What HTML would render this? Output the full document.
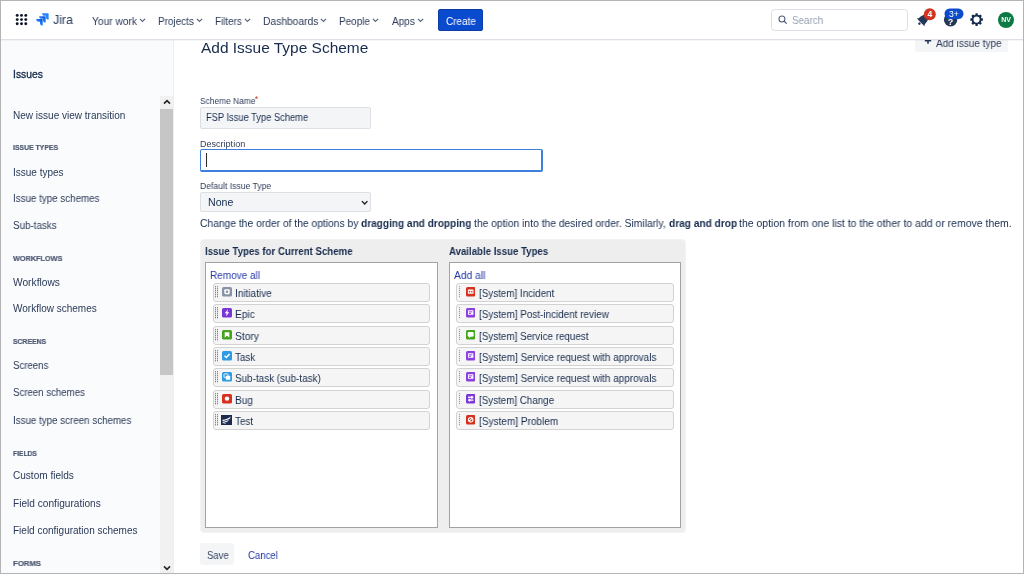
<!DOCTYPE html>
<html lang="en">
<head>
<meta charset="utf-8">
<title>Add Issue Type Scheme - Jira</title>
<style>
*{box-sizing:border-box;margin:0;padding:0}
html,body{width:1024px;height:574px;overflow:hidden;background:#fff}
body{font-family:"Liberation Sans","DejaVu Sans",sans-serif;color:#172b4d;font-size:10px;position:relative}
.abs{position:absolute}
.t{position:absolute;white-space:nowrap;line-height:1.2;transform-origin:0 0;will-change:transform}
#frame{position:absolute;left:0;top:0;width:1024px;height:574px;border:1px solid #b4b4b4;z-index:50}
#hdr{position:absolute;left:1px;top:1px;width:1022px;height:39px;background:#fff;border-bottom:1px solid #dcdfe5;z-index:5;box-shadow:0 1px 1px rgba(9,30,66,.04)}
.chev{position:absolute;top:17.6px;z-index:6}
#createb{position:absolute;left:438px;top:9px;width:45.4px;height:22px;background:#0a4acf;border-radius:2px;border:1px solid #0a3da6;z-index:6}
#searchb{position:absolute;left:771px;top:9px;width:136.5px;height:21.5px;border:1px solid #dde0e7;border-radius:3.5px;background:#fff;z-index:6}
#side{position:absolute;left:1px;top:40px;width:173px;height:533px;background:#fafbfc;border-right:1px solid #eceef1}
#sbar{position:absolute;left:160px;top:96px;width:13px;height:477px;background:#f1f1f1}
#thumb{position:absolute;left:0;top:13px;width:13px;height:265.6px;background:#c6c6c6}
.inp{position:absolute;left:200px;border:1px solid #dcdfe4;border-radius:2px;background:#f4f5f7}
#panel{position:absolute;left:200px;top:239px;width:485.6px;height:293.7px;background:#eeeeee;border:1px solid #f3f3f3;border-radius:4px}
.box{position:absolute;top:262px;height:266px;background:#fff;border:1px solid #a2a2a2}
.it{position:absolute;height:19px;background:#f5f5f5;border:1px solid #d2d2d2;border-radius:3px;z-index:3}
.g{position:absolute;left:1px;top:2px;width:3px;height:12px;background:linear-gradient(to right,transparent 1px,#f5f5f5 1px 2px,transparent 2px),repeating-linear-gradient(to bottom,#858585 0 1px,#cdcdcd 1px 2px)}
.g2{left:2px;width:2px;background:linear-gradient(to right,transparent 1px,#f5f5f5 1px),repeating-linear-gradient(to bottom,#9a9a9a 0 1px,#e2e2e2 1px 2px)}
.ic{position:absolute;z-index:4}
#saveb{position:absolute;left:200px;top:543.3px;width:34.3px;height:22.2px;background:#f4f5f7;border-radius:3px}
#additb{position:absolute;left:915px;top:30px;width:93px;height:22px;background:#f4f5f7;border-radius:2px;z-index:1}
</style>
</head>
<body>
<div id="side"></div>
<div id="sbar"><div id="thumb"></div>
<svg class="abs" style="left:2.6px;top:3px" width="8" height="6" viewBox="0 0 8 6"><path d="M1 4.6L4 1.6l3 3" fill="none" stroke="#2a2326" stroke-width="1.6"/></svg>
<svg class="abs" style="left:2.6px;top:469.1px" width="8" height="6" viewBox="0 0 8 6"><path d="M1 1.4L4 4.4l3-3" fill="none" stroke="#2a2326" stroke-width="1.6"/></svg>
</div>
<div id="additb"></div>
<svg class="abs" style="left:924px;top:37px;z-index:2" width="8" height="8" viewBox="0 0 8 8"><path d="M4 .4v6.4M.8 3.6h6.4" stroke="#253858" stroke-width="1.6"/></svg>
<span class="abs" style="left:254.8px;top:93.8px;font-size:9px;line-height:1.2;color:#d3341f;z-index:2">*</span>
<div class="inp" style="top:107px;width:171px;height:22px"></div>
<div class="inp" style="top:149px;width:343px;height:23px;background:#fff;border:solid #3f7fdc;border-width:1px 2px 2px 1px;border-radius:2px"></div>
<i class="abs" style="left:206px;top:153px;width:1px;height:13.5px;background:#2a2a2a"></i>
<div class="inp" style="top:192px;width:171px;height:20px"></div>
<svg class="abs" style="left:360.6px;top:199.8px;z-index:2" width="7.4" height="5.6" viewBox="0 0 8 6"><path d="M1 1.2l3 3 3-3" fill="none" stroke="#1c1c1c" stroke-width="1.5"/></svg>
<div id="panel"></div>
<div class="box" style="left:205px;width:233px"></div>
<div class="box" style="left:449px;width:232px"></div>
<div class="it" style="left:213px;top:283px;width:217px"><i class="g"></i></div>
<svg class="ic" style="left:222px;top:287.4px" width="10" height="9.4" viewBox="0 0 10 10" preserveAspectRatio="none"><rect width="10" height="10" rx="1.6" fill="#8993a4"/><rect x="2.3" y="2.3" width="5.4" height="5.4" rx="1.2" fill="#fff"/><circle cx="5" cy="5" r="1.3" fill="#8993a4"/></svg>
<div class="it" style="left:456px;top:283px;width:218px"><i class="g g2"></i></div>
<svg class="ic" style="left:465.8px;top:287.4px" width="9.4" height="9.4" viewBox="0 0 10 10" preserveAspectRatio="none"><rect width="10" height="10" rx="1.6" fill="#d6301f"/><rect x="2" y="2.7" width="6" height="4.6" rx=".9" fill="#fff"/><rect x="3" y="4.2" width="1.5" height="1.5" fill="#d6301f"/><rect x="5.5" y="4.2" width="1.5" height="1.5" fill="#d6301f"/></svg>
<div class="it" style="left:213px;top:304px;width:217px"><i class="g"></i></div>
<svg class="ic" style="left:222px;top:308.4px" width="10" height="9.4" viewBox="0 0 10 10" preserveAspectRatio="none"><rect width="10" height="10" rx="1.6" fill="#7a35d6"/><path d="M6.1 1.3L2.6 5.6h2L3.9 8.7 7.4 4.4H5.3z" fill="#fff"/></svg>
<div class="it" style="left:456px;top:304px;width:218px"><i class="g g2"></i></div>
<svg class="ic" style="left:465.8px;top:308.4px" width="9.4" height="9.4" viewBox="0 0 10 10" preserveAspectRatio="none"><rect width="10" height="10" rx="1.6" fill="#8a3fe0"/><rect x="2.1" y="2.5" width="5.8" height="4.8" rx=".5" fill="#fff"/><rect x="3" y="3.6" width="3.8" height="1" fill="#8a3fe0"/><rect x="3" y="5.2" width="2.4" height="1" fill="#8a3fe0"/></svg>
<div class="it" style="left:213px;top:326px;width:217px"><i class="g"></i></div>
<svg class="ic" style="left:222px;top:330.4px" width="10" height="9.4" viewBox="0 0 10 10" preserveAspectRatio="none"><rect width="10" height="10" rx="1.6" fill="#46a31c"/><path d="M2.7 2.3h4.6v5.6L5 6.1 2.7 7.9z" fill="#fff"/></svg>
<div class="it" style="left:456px;top:326px;width:218px"><i class="g g2"></i></div>
<svg class="ic" style="left:465.8px;top:330.4px" width="9.4" height="9.4" viewBox="0 0 10 10" preserveAspectRatio="none"><rect width="10" height="10" rx="1.6" fill="#46a31c"/><path d="M3 2.1h4a1.2 1.2 0 0 1 1.2 1.2v2.6a1.2 1.2 0 0 1-1.2 1.2H4.8L3.2 8.4V7.1H3a1.2 1.2 0 0 1-1.2-1.2V3.3A1.2 1.2 0 0 1 3 2.1z" fill="#fff"/></svg>
<div class="it" style="left:213px;top:347px;width:217px"><i class="g"></i></div>
<svg class="ic" style="left:222px;top:351.4px" width="10" height="9.4" viewBox="0 0 10 10" preserveAspectRatio="none"><rect width="10" height="10" rx="1.6" fill="#2f9ae4"/><path d="M2.5 5.1l1.8 1.8 3.3-3.7" fill="none" stroke="#fff" stroke-width="1.5"/></svg>
<div class="it" style="left:456px;top:347px;width:218px"><i class="g g2"></i></div>
<svg class="ic" style="left:465.8px;top:351.4px" width="9.4" height="9.4" viewBox="0 0 10 10" preserveAspectRatio="none"><rect width="10" height="10" rx="1.6" fill="#8a3fe0"/><rect x="2.1" y="2.5" width="5.8" height="4.8" rx=".5" fill="#fff"/><rect x="3" y="3.6" width="3.8" height="1" fill="#8a3fe0"/><rect x="3" y="5.2" width="2.4" height="1" fill="#8a3fe0"/></svg>
<div class="it" style="left:213px;top:368px;width:217px"><i class="g"></i></div>
<svg class="ic" style="left:222px;top:372.4px" width="10" height="9.4" viewBox="0 0 10 10" preserveAspectRatio="none"><rect width="10" height="10" rx="1.6" fill="#2f9ae4"/><rect x="2" y="2" width="4" height="4" rx=".6" fill="none" stroke="#fff" stroke-width=".9"/><rect x="3.9" y="3.9" width="4.3" height="4.3" rx=".6" fill="#fff"/></svg>
<div class="it" style="left:456px;top:368px;width:218px"><i class="g g2"></i></div>
<svg class="ic" style="left:465.8px;top:372.4px" width="9.4" height="9.4" viewBox="0 0 10 10" preserveAspectRatio="none"><rect width="10" height="10" rx="1.6" fill="#8a3fe0"/><rect x="2.1" y="2.5" width="5.8" height="4.8" rx=".5" fill="#fff"/><rect x="3" y="3.6" width="3.8" height="1" fill="#8a3fe0"/><rect x="3" y="5.2" width="2.4" height="1" fill="#8a3fe0"/></svg>
<div class="it" style="left:213px;top:390px;width:217px"><i class="g"></i></div>
<svg class="ic" style="left:222px;top:394.4px" width="10" height="9.4" viewBox="0 0 10 10" preserveAspectRatio="none"><rect width="10" height="10" rx="1.6" fill="#d6301f"/><circle cx="5" cy="5" r="2.3" fill="#fff"/></svg>
<div class="it" style="left:456px;top:390px;width:218px"><i class="g g2"></i></div>
<svg class="ic" style="left:465.8px;top:394.4px" width="9.4" height="9.4" viewBox="0 0 10 10" preserveAspectRatio="none"><rect width="10" height="10" rx="1.6" fill="#7a35d6"/><rect x="2.1" y="2.8" width="5.8" height="1.4" fill="#fff"/><rect x="2.1" y="5.8" width="5.8" height="1.4" fill="#fff"/><rect x="5.4" y="2" width="1.6" height="3" fill="#fff"/><rect x="3" y="5" width="1.6" height="3" fill="#fff"/></svg>
<div class="it" style="left:213px;top:411px;width:217px"><i class="g"></i></div>
<svg class="ic" style="left:221.2px;top:414.8px" width="11" height="10.4" viewBox="0 0 12 12" preserveAspectRatio="none"><rect width="12" height="12" fill="#1b2a4e"/><path d="M1.6 5.6C5 5.2 8.4 3.6 10.6 1.6C10.4 3 9.8 4 9 4.8L1.6 7.2z" fill="#fff"/><path d="M1.8 8.2L8.6 5.8C8.2 6.8 7.6 7.4 6.8 7.9L1.8 9.6z" fill="#e8ebf2"/><path d="M2 10.4l4.2-1.4c-.5.8-1.2 1.2-2 1.4z" fill="#cfd5e4"/></svg>
<div class="it" style="left:456px;top:411px;width:218px"><i class="g g2"></i></div>
<svg class="ic" style="left:465.8px;top:415.4px" width="9.4" height="9.4" viewBox="0 0 10 10" preserveAspectRatio="none"><rect width="10" height="10" rx="1.6" fill="#d6301f"/><circle cx="5" cy="5" r="2.4" fill="none" stroke="#fff" stroke-width="1.1"/><path d="M3.4 6.6l3.2-3.2" stroke="#fff" stroke-width="1.1"/></svg>
<div id="saveb"></div>
<div id="hdr"></div>
<svg class="abs" style="left:15px;top:13px;z-index:6" width="13" height="13" viewBox="0 0 13 13"><g fill="#0b1226"><circle cx="2.2" cy="2.4" r="1.45"/><circle cx="6.5" cy="2.4" r="1.45"/><circle cx="10.8" cy="2.4" r="1.45"/><circle cx="2.2" cy="6.6" r="1.45"/><circle cx="6.5" cy="6.6" r="1.45"/><circle cx="10.8" cy="6.6" r="1.45"/><circle cx="2.2" cy="10.8" r="1.45"/><circle cx="6.5" cy="10.8" r="1.45"/><circle cx="10.8" cy="10.8" r="1.45"/></g></svg>
<svg class="abs" style="left:34.3px;top:10.9px;z-index:6" width="17.1" height="17.1" viewBox="0 0 32 32"><defs><linearGradient id="jg1" x1="22" y1="9.6" x2="15" y2="16.8" gradientUnits="userSpaceOnUse"><stop offset=".18" stop-color="#0b55d8"/><stop offset="1" stop-color="#2684ff"/></linearGradient><linearGradient id="jg2" x1="16.4" y1="15.2" x2="9.4" y2="22.4" gradientUnits="userSpaceOnUse"><stop offset=".18" stop-color="#0b55d8"/><stop offset="1" stop-color="#2684ff"/></linearGradient></defs><path d="M26.42 4H15.2a5.06 5.06 0 0 0 5.06 5.06h2.07v2A5.06 5.06 0 0 0 27.4 16.1V5a1 1 0 0 0-.98-1z" fill="#2684ff"/><path d="M20.86 9.6H9.64a5.06 5.06 0 0 0 5.06 5.05h2.07v2a5.06 5.06 0 0 0 5.06 5.06V10.57a1 1 0 0 0-.97-.97z" fill="url(#jg1)"/><path d="M15.3 15.18H4.08a5.06 5.06 0 0 0 5.06 5.06h2.07v2a5.06 5.06 0 0 0 5.05 5.05V16.15a1 1 0 0 0-.96-.97z" fill="url(#jg2)"/></svg>
<svg class="chev" style="left:138.6px" width="7" height="5" viewBox="0 0 7 5"><path d="M.9 .9l2.6 2.6L6.1 .9" fill="none" stroke="#55637c" stroke-width="1.15"/></svg><svg class="chev" style="left:196.2px" width="7" height="5" viewBox="0 0 7 5"><path d="M.9 .9l2.6 2.6L6.1 .9" fill="none" stroke="#55637c" stroke-width="1.15"/></svg><svg class="chev" style="left:243.9px" width="7" height="5" viewBox="0 0 7 5"><path d="M.9 .9l2.6 2.6L6.1 .9" fill="none" stroke="#55637c" stroke-width="1.15"/></svg><svg class="chev" style="left:319.6px" width="7" height="5" viewBox="0 0 7 5"><path d="M.9 .9l2.6 2.6L6.1 .9" fill="none" stroke="#55637c" stroke-width="1.15"/></svg><svg class="chev" style="left:371.8px" width="7" height="5" viewBox="0 0 7 5"><path d="M.9 .9l2.6 2.6L6.1 .9" fill="none" stroke="#55637c" stroke-width="1.15"/></svg><svg class="chev" style="left:416.6px" width="7" height="5" viewBox="0 0 7 5"><path d="M.9 .9l2.6 2.6L6.1 .9" fill="none" stroke="#55637c" stroke-width="1.15"/></svg>
<div id="createb"></div>
<div id="searchb"></div>
<svg class="abs" style="left:777.6px;top:15.2px;z-index:7" width="9.6" height="9.6" viewBox="0 0 10 10"><circle cx="4.1" cy="4.1" r="3.1" fill="none" stroke="#4f5c76" stroke-width="1.1"/><path d="M6.5 6.5L8.7 8.7" stroke="#4f5c76" stroke-width="1.2" stroke-linecap="round"/></svg>
<svg class="abs" style="left:915px;top:6px;z-index:6" width="24" height="24" viewBox="0 0 24 24"><g transform="translate(8.6 13.4) rotate(45)" fill="#253858"><path d="M-4.3 2.6C-4.3 -1.6 -3 -5.4 0 -5.4C3 -5.4 4.3 -1.6 4.3 2.6L5.4 4.2H-5.4Z"/><circle cx="0" cy="5.9" r="1.25"/></g><circle cx="14.8" cy="8.2" r="6" fill="#d3341f"/><text x="14.8" y="11.3" font-size="8.6" font-weight="bold" fill="#fff" text-anchor="middle" font-family="Liberation Sans, sans-serif">4</text></svg>
<svg class="abs" style="left:942px;top:6px;z-index:6" width="24" height="24" viewBox="0 0 24 24"><circle cx="8.6" cy="13.8" r="6.7" fill="#253858"/><text x="8.6" y="18.6" font-size="9" font-weight="bold" fill="#fff" text-anchor="middle" font-family="Liberation Sans, sans-serif">?</text><rect x="2.5" y="2.5" width="19" height="10.5" rx="5.2" fill="#0c4bcb"/><text x="12" y="10.6" font-size="8.6" fill="#fff" text-anchor="middle" font-family="Liberation Sans, sans-serif">3+</text></svg>
<svg class="abs" style="left:970.4px;top:12.8px;z-index:6" width="13.2" height="13.2" viewBox="0 0 15 15"><g fill="#172b4d"><circle cx="7.5" cy="7.5" r="5.6"/><rect x="6.1" y=".3" width="2.8" height="14.4" rx=".7"/><rect x="6.1" y=".3" width="2.8" height="14.4" rx=".7" transform="rotate(45 7.5 7.5)"/><rect x="6.1" y=".3" width="2.8" height="14.4" rx=".7" transform="rotate(90 7.5 7.5)"/><rect x="6.1" y=".3" width="2.8" height="14.4" rx=".7" transform="rotate(135 7.5 7.5)"/></g><circle cx="7.5" cy="7.5" r="3.5" fill="#fff"/></svg>
<div class="abs" style="left:998px;top:11.5px;width:16px;height:16px;border-radius:50%;background:#0c7a44;z-index:6;color:#fff;font-size:7px;font-weight:bold;line-height:16px;text-align:center;letter-spacing:-.2px">NV</div>
<span id="jira" class="t" style="left:53px;top:12px;font-size:13.3px;color:#253858;transform:scaleX(0.9305);z-index:6;">Jira</span>
<span id="n1" class="t" style="left:92px;top:15px;font-size:10.5px;color:#2c3a57;transform:scaleX(0.9714);z-index:6;">Your work</span>
<span id="n2" class="t" style="left:158px;top:15px;font-size:10.5px;color:#2c3a57;transform:scaleX(0.9445);z-index:6;">Projects</span>
<span id="n3" class="t" style="left:215px;top:15px;font-size:10.5px;color:#2c3a57;transform:scaleX(0.9382);z-index:6;">Filters</span>
<span id="n4" class="t" style="left:263px;top:15px;font-size:10.5px;color:#2c3a57;transform:scaleX(0.9794);z-index:6;">Dashboards</span>
<span id="n5" class="t" style="left:339px;top:15px;font-size:10.5px;color:#2c3a57;transform:scaleX(0.9491);z-index:6;">People</span>
<span id="n6" class="t" style="left:392px;top:15px;font-size:10.5px;color:#2c3a57;transform:scaleX(0.9517);z-index:6;">Apps</span>
<span id="create" class="t" style="left:446px;top:15px;font-size:10.5px;color:#ffffff;transform:scaleX(0.9463);z-index:7;">Create</span>
<span id="search" class="t" style="left:792px;top:14px;font-size:10.5px;color:#959eb1;transform:scaleX(0.9355);z-index:7;">Search</span>
<span id="s0" class="t" style="left:13px;top:69px;font-size:10px;color:#172b4d;transform:scaleX(1.0354);z-index:1;-webkit-text-stroke:.3px #172b4d;">Issues</span>
<span id="s1" class="t" style="left:13px;top:110px;font-size:10px;color:#2a3a58;transform:scaleX(1.0016);z-index:1;">New issue view transition</span>
<span id="s2" class="t" style="left:13px;top:167px;font-size:10px;color:#2a3a58;transform:scaleX(0.9921);z-index:1;">Issue types</span>
<span id="s3" class="t" style="left:13px;top:193px;font-size:10px;color:#2a3a58;transform:scaleX(0.9794);z-index:1;">Issue type schemes</span>
<span id="s4" class="t" style="left:13px;top:220px;font-size:10px;color:#2a3a58;transform:scaleX(0.9805);z-index:1;">Sub-tasks</span>
<span id="s5" class="t" style="left:13px;top:277px;font-size:10px;color:#2a3a58;transform:scaleX(1.0206);z-index:1;">Workflows</span>
<span id="s6" class="t" style="left:13px;top:303px;font-size:10px;color:#2a3a58;z-index:1;">Workflow schemes</span>
<span id="s7" class="t" style="left:13px;top:360px;font-size:10px;color:#2a3a58;transform:scaleX(0.9616);z-index:1;">Screens</span>
<span id="s8" class="t" style="left:13px;top:387px;font-size:10px;color:#2a3a58;transform:scaleX(0.9649);z-index:1;">Screen schemes</span>
<span id="s9" class="t" style="left:13px;top:415px;font-size:10px;color:#2a3a58;transform:scaleX(0.9768);z-index:1;">Issue type screen schemes</span>
<span id="s10" class="t" style="left:13px;top:470px;font-size:10px;color:#2a3a58;transform:scaleX(1.0048);z-index:1;">Custom fields</span>
<span id="s11" class="t" style="left:13px;top:498px;font-size:10px;color:#2a3a58;transform:scaleX(1.0122);z-index:1;">Field configurations</span>
<span id="s12" class="t" style="left:13px;top:525px;font-size:10px;color:#2a3a58;transform:scaleX(0.9983);z-index:1;">Field configuration schemes</span>
<span id="h0" class="t" style="left:13px;top:143px;font-size:8.0px;color:#4a5670;font-weight:bold;transform:scaleX(0.8579);z-index:1;-webkit-text-stroke:.2px #4a5670;">ISSUE TYPES</span>
<span id="h1" class="t" style="left:13px;top:254px;font-size:8.0px;color:#4a5670;font-weight:bold;transform:scaleX(0.9104);z-index:1;-webkit-text-stroke:.2px #4a5670;">WORKFLOWS</span>
<span id="h2" class="t" style="left:13px;top:337px;font-size:8.0px;color:#4a5670;font-weight:bold;transform:scaleX(0.8570);z-index:1;-webkit-text-stroke:.2px #4a5670;">SCREENS</span>
<span id="h3" class="t" style="left:13px;top:449px;font-size:8.0px;color:#4a5670;font-weight:bold;transform:scaleX(0.8398);z-index:1;-webkit-text-stroke:.2px #4a5670;">FIELDS</span>
<span id="h4" class="t" style="left:13px;top:559px;font-size:8.0px;color:#4a5670;font-weight:bold;transform:scaleX(0.9691);z-index:1;-webkit-text-stroke:.2px #4a5670;">FORMS</span>
<span id="title" class="t" style="left:201px;top:39px;font-size:15.3px;color:#172b4d;transform:scaleX(1.0108);z-index:1;">Add Issue Type Scheme</span>
<span id="addit" class="t" style="left:936px;top:37px;font-size:10.5px;color:#2c3a57;transform:scaleX(0.9523);z-index:2;">Add issue type</span>
<span id="l1" class="t" style="left:200px;top:96px;font-size:9px;color:#2f3d5a;transform:scaleX(0.9328);z-index:1;">Scheme Name</span>
<span id="v1" class="t" style="left:206px;top:112px;font-size:10.0px;color:#172b4d;transform:scaleX(0.9304);z-index:2;">FSP Issue Type Scheme</span>
<span id="l2" class="t" style="left:200px;top:139px;font-size:9px;color:#2f3d5a;transform:scaleX(1.0036);z-index:1;">Description</span>
<span id="l3" class="t" style="left:200px;top:181px;font-size:9px;color:#2f3d5a;transform:scaleX(0.9585);z-index:1;">Default Issue Type</span>
<span id="v3" class="t" style="left:208px;top:197px;font-size:10.0px;color:#172b4d;transform:scaleX(1.0603);z-index:2;">None</span>
<span id="hp1" class="t" style="left:200px;top:217px;font-size:10.5px;color:#172b4d;transform:scaleX(0.9796);z-index:1;">Change the order of the options by</span>
<span id="hp2" class="t" style="left:361px;top:217px;font-size:10.5px;color:#172b4d;font-weight:bold;transform:scaleX(0.9603);z-index:1;">dragging and dropping</span>
<span id="hp3" class="t" style="left:474px;top:217px;font-size:10.5px;color:#172b4d;transform:scaleX(0.9812);z-index:1;">the option into the desired order. Similarly,</span>
<span id="hp4" class="t" style="left:669px;top:217px;font-size:10.5px;color:#172b4d;font-weight:bold;transform:scaleX(0.9642);z-index:1;">drag and drop</span>
<span id="hp5" class="t" style="left:739px;top:217px;font-size:10.5px;color:#172b4d;transform:scaleX(0.9961);z-index:1;">the option from one list to the other to add or remove them.</span>
<span id="ph1" class="t" style="left:205px;top:245px;font-size:10.5px;color:#172b4d;font-weight:bold;transform:scaleX(0.9207);z-index:2;">Issue Types for Current Scheme</span>
<span id="ph2" class="t" style="left:449px;top:245px;font-size:10.5px;color:#172b4d;font-weight:bold;transform:scaleX(0.9180);z-index:2;">Available Issue Types</span>
<span id="ra" class="t" style="left:210px;top:269px;font-size:10.5px;color:#2438a6;transform:scaleX(0.9516);z-index:3;">Remove all</span>
<span id="aa" class="t" style="left:454px;top:269px;font-size:10.5px;color:#2438a6;transform:scaleX(0.9799);z-index:3;">Add all</span>
<span id="li0" class="t" style="left:235px;top:287px;font-size:10.5px;color:#172b4d;transform:scaleX(0.9517);z-index:4;">Initiative</span>
<span id="li1" class="t" style="left:235px;top:308px;font-size:10.5px;color:#172b4d;transform:scaleX(0.9688);z-index:4;">Epic</span>
<span id="li2" class="t" style="left:235px;top:330px;font-size:10.5px;color:#172b4d;transform:scaleX(0.9748);z-index:4;">Story</span>
<span id="li3" class="t" style="left:235px;top:351px;font-size:10.5px;color:#172b4d;transform:scaleX(0.9334);z-index:4;">Task</span>
<span id="li4" class="t" style="left:235px;top:372px;font-size:10.5px;color:#172b4d;transform:scaleX(0.9430);z-index:4;">Sub-task (sub-task)</span>
<span id="li5" class="t" style="left:235px;top:394px;font-size:10.5px;color:#172b4d;transform:scaleX(0.9617);z-index:4;">Bug</span>
<span id="li6" class="t" style="left:235px;top:415px;font-size:10.5px;color:#172b4d;transform:scaleX(0.9446);z-index:4;">Test</span>
<span id="ri0" class="t" style="left:479px;top:287px;font-size:10.5px;color:#172b4d;transform:scaleX(0.9352);z-index:4;">[System] Incident</span>
<span id="ri1" class="t" style="left:479px;top:308px;font-size:10.5px;color:#172b4d;transform:scaleX(0.9430);z-index:4;">[System] Post-incident review</span>
<span id="ri2" class="t" style="left:479px;top:330px;font-size:10.5px;color:#172b4d;transform:scaleX(0.9384);z-index:4;">[System] Service request</span>
<span id="ri3" class="t" style="left:479px;top:351px;font-size:10.5px;color:#172b4d;transform:scaleX(0.9499);z-index:4;">[System] Service request with approvals</span>
<span id="ri4" class="t" style="left:479px;top:372px;font-size:10.5px;color:#172b4d;transform:scaleX(0.9499);z-index:4;">[System] Service request with approvals</span>
<span id="ri5" class="t" style="left:479px;top:394px;font-size:10.5px;color:#172b4d;transform:scaleX(0.9321);z-index:4;">[System] Change</span>
<span id="ri6" class="t" style="left:479px;top:415px;font-size:10.5px;color:#172b4d;transform:scaleX(0.9567);z-index:4;">[System] Problem</span>
<span id="save" class="t" style="left:207px;top:550px;font-size:10.3px;color:#344563;transform:scaleX(0.9248);z-index:2;">Save</span>
<span id="cancel" class="t" style="left:248px;top:550px;font-size:10.3px;color:#2438a6;transform:scaleX(0.9288);z-index:2;">Cancel</span>
<div id="frame"></div>
</body>
</html>
